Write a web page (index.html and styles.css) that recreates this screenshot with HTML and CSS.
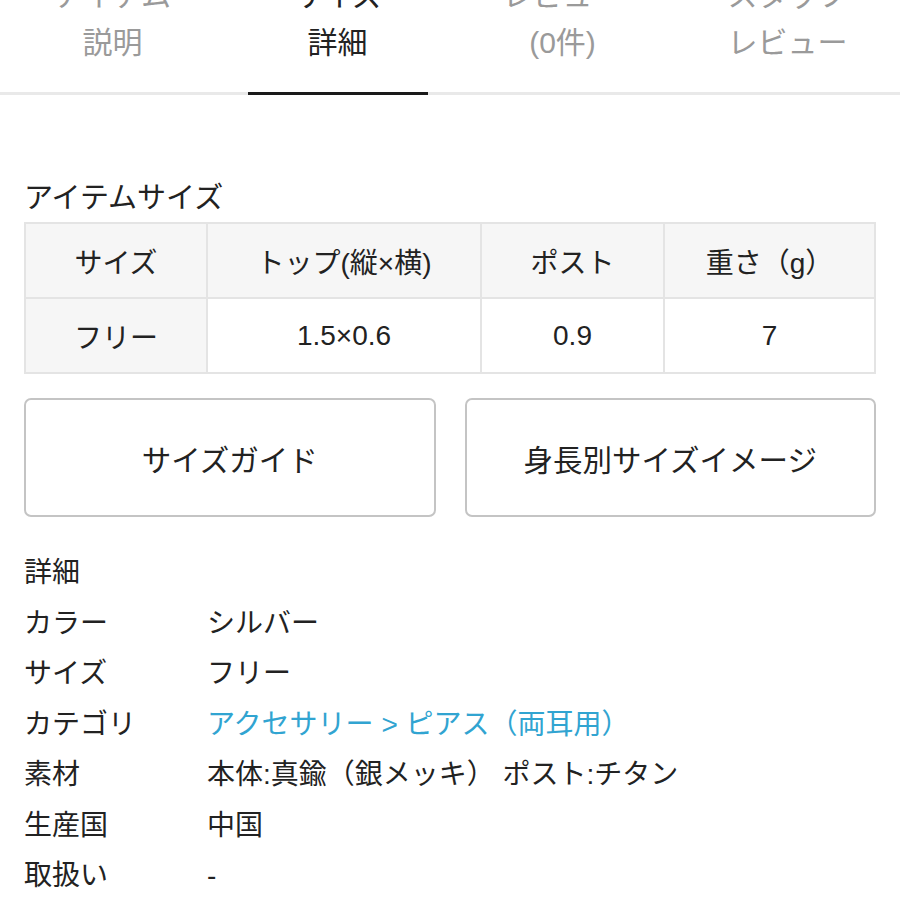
FILE: index.html
```html
<!DOCTYPE html>
<html lang="ja">
<head>
<meta charset="utf-8">
<title>サイズ詳細</title>
<link rel="stylesheet" href="styles.css">
</head>
<body>
<nav class="tabs">
  <div class="tab">アイテム<br>説明</div>
  <div class="tab tab-active">サイズ<br>詳細</div>
  <div class="tab">レビュー<br>(0件)</div>
  <div class="tab">スタッフ<br>レビュー</div>
</nav>
<main class="content">
  <h2 class="section-title">アイテムサイズ</h2>
  <table class="size-table">
    <tr>
      <th class="col-size">サイズ</th>
      <th class="col-top">トップ(縦×横)</th>
      <th class="col-post">ポスト</th>
      <th class="col-weight">重さ（g）</th>
    </tr>
    <tr>
      <th>フリー</th>
      <td>1.5×0.6</td>
      <td>0.9</td>
      <td>7</td>
    </tr>
  </table>
  <div class="buttons">
    <button class="btn">サイズガイド</button>
    <button class="btn">身長別サイズイメージ</button>
  </div>
  <h2 class="detail-title">詳細</h2>
  <dl class="details">
    <dt>カラー</dt><dd>シルバー</dd>
    <dt>サイズ</dt><dd>フリー</dd>
    <dt>カテゴリ</dt><dd><a class="link" href="#">アクセサリー &gt; ピアス（両耳用）</a></dd>
    <dt>素材</dt><dd>本体:真鍮（銀メッキ） ポスト:チタン</dd>
    <dt>生産国</dt><dd>中国</dd>
    <dt>取扱い</dt><dd>-</dd>
  </dl>
</main>
</body>
</html>
```

FILE: styles.css
```css
html, body {
  margin: 0;
  padding: 0;
  background: #ffffff;
}
body {
  font-family: "Liberation Sans", "Noto Sans CJK JP", sans-serif;
  font-size: 28px;
  color: #222222;
  overflow: hidden;
}
.tabs {
  display: flex;
  margin-top: -28px;
  border-bottom: 3px solid #e9e9e9;
}
.tab {
  flex: 1 1 0;
  position: relative;
  text-align: center;
  font-size: 30px;
  line-height: 47px;
  padding-bottom: 26px;
  color: #9a9a9a;
}
.tab-active {
  color: #222222;
}
.tab-active::after {
  content: "";
  position: absolute;
  left: 23px;
  right: 22px;
  bottom: -3px;
  height: 3px;
  background: #1a1a1a;
}
.content {
  padding: 0 24px;
}
.section-title {
  margin: 83px 0 4px;
  font-size: 29px;
  font-weight: normal;
  line-height: 40px;
}
.size-table {
  width: 100%;
  border-collapse: collapse;
  border: 2px solid #e4e4e4;
}
.size-table th,
.size-table td {
  border: 2px solid #e4e4e4;
  height: 73px;
  padding: 0;
  text-align: center;
  font-weight: normal;
  font-size: 28px;
}
.size-table th {
  background: #f6f6f6;
}
.col-size { width: 180px; }
.col-top { width: 272px; }
.col-post { width: 181px; }
.buttons {
  display: grid;
  grid-template-columns: 1fr 1fr;
  column-gap: 29px;
  margin-top: 24px;
}
.btn {
  height: 119px;
  background: #ffffff;
  border: 2px solid #c4c4c4;
  border-radius: 7px;
  font-family: "Liberation Sans", "Noto Sans CJK JP", sans-serif;
  font-size: 29.5px;
  color: #222222;
  padding: 0;
}
.detail-title {
  margin: 31px 0 0;
  font-size: 28px;
  font-weight: normal;
  line-height: 50.5px;
}
.details {
  display: grid;
  grid-template-columns: 183px 1fr;
  margin: 0;
  line-height: 50.5px;
}
.details dt,
.details dd {
  margin: 0;
  white-space: nowrap;
}
.link {
  color: #31a4d1;
  text-decoration: none;
}
```
